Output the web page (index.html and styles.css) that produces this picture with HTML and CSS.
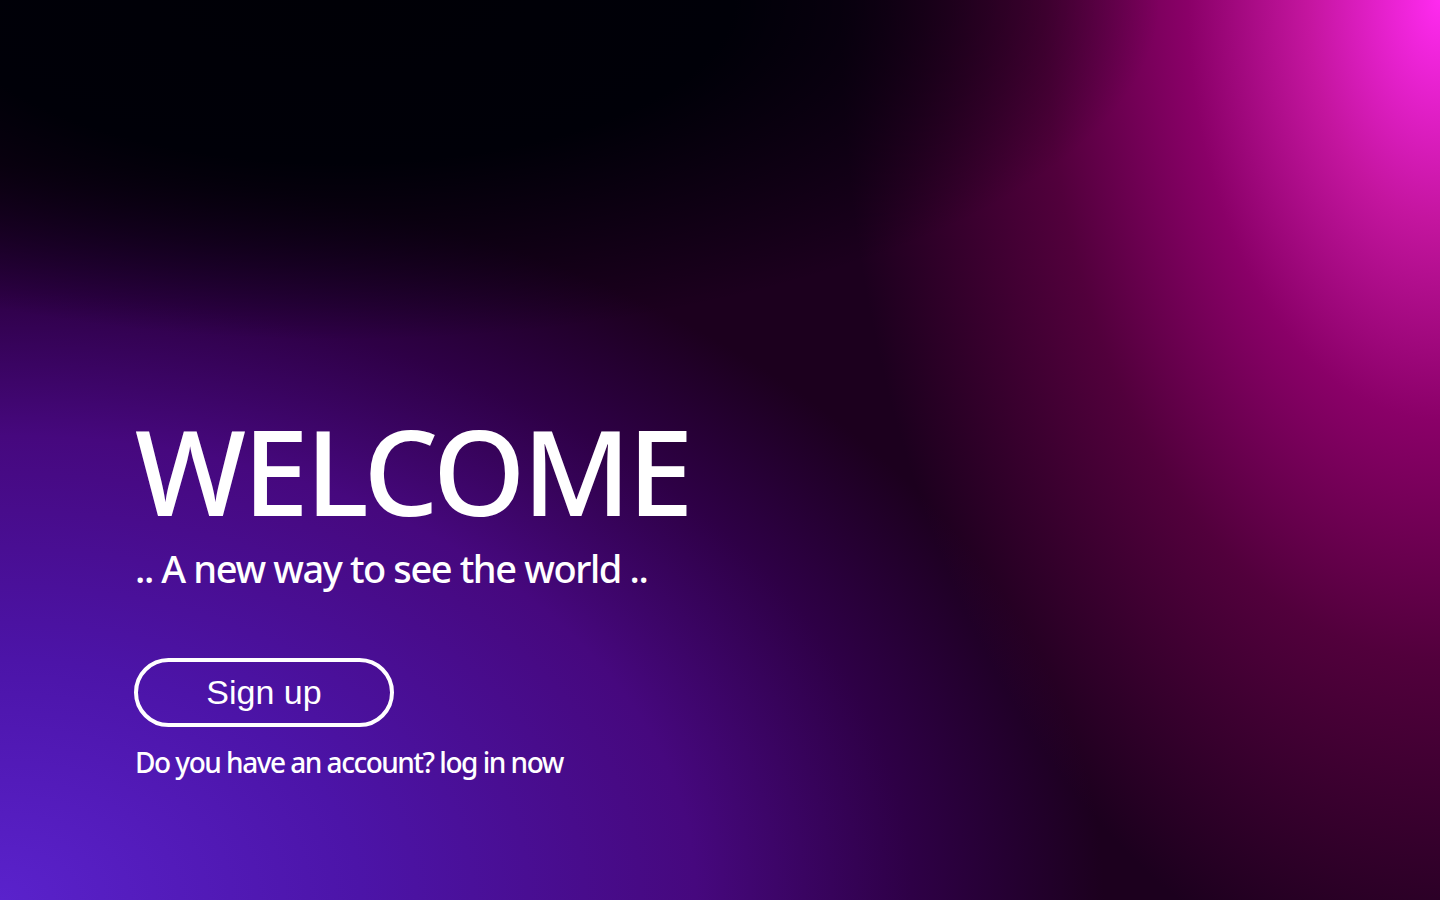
FILE: index.html
```html
<!DOCTYPE html>
<html lang="en">
<head>
<meta charset="utf-8">
<title>Welcome</title>
<link rel="stylesheet" href="styles.css">
</head>
<body>
<main class="hero">
  <section class="intro">
    <h1 class="title">WELCOME</h1>
    <p class="tagline">.. A new way to see the world ..</p>
    <button class="signup" type="button">Sign up</button>
    <p class="login">Do you have an account? log in now</p>
  </section>
</main>
</body>
</html>
```

FILE: styles.css
```css
html, body {
  margin: 0;
  padding: 0;
  height: 100%;
}

body {
  font-family: "Noto Sans", "Open Sans", sans-serif;
  color: #fff;
  overflow: hidden;
}

.hero {
  width: 1440px;
  height: 900px;
  box-sizing: border-box;
  padding: 412px 0 0 135px;
  background-color: #1c001e;
  background-image:
    radial-gradient(ellipse 820px 340px at 340px 0px, #000006 0%, #000008 48%, rgba(0,0,8,0) 100%),
    radial-gradient(ellipse 600px 1000px at 1440px 0px, #ff2af0 0%, #c4159f 22%, #8a0068 42%, #52003c 66%, rgba(40,0,30,0) 100%),
    radial-gradient(ellipse 1200px 800px at 0px 900px, #5a22cc 0%, #4c14a8 30%, #46087e 58%, #2e0046 76%, rgba(28,0,30,0) 92%);
}

.intro {
  display: flex;
  flex-direction: column;
  align-items: flex-start;
}

.title {
  margin: 0;
  font-size: 118px;
  font-weight: 500;
  line-height: 1;
  letter-spacing: -3px;
}

.tagline {
  margin: 16px 0 0;
  font-size: 38px;
  font-weight: 500;
  letter-spacing: -1.4px;
  line-height: 1.2;
}

.signup {
  margin: 66px 0 0 -1px;
  width: 260px;
  height: 69px;
  border: 4px solid #fff;
  border-radius: 35px;
  background: transparent;
  color: #fff;
  font-family: "Liberation Sans", Arial, sans-serif;
  font-size: 34px;
  cursor: pointer;
}

.login {
  margin: 17px 0 0;
  font-size: 28px;
  font-weight: 500;
  letter-spacing: -1.5px;
  line-height: 1.3;
}
```
